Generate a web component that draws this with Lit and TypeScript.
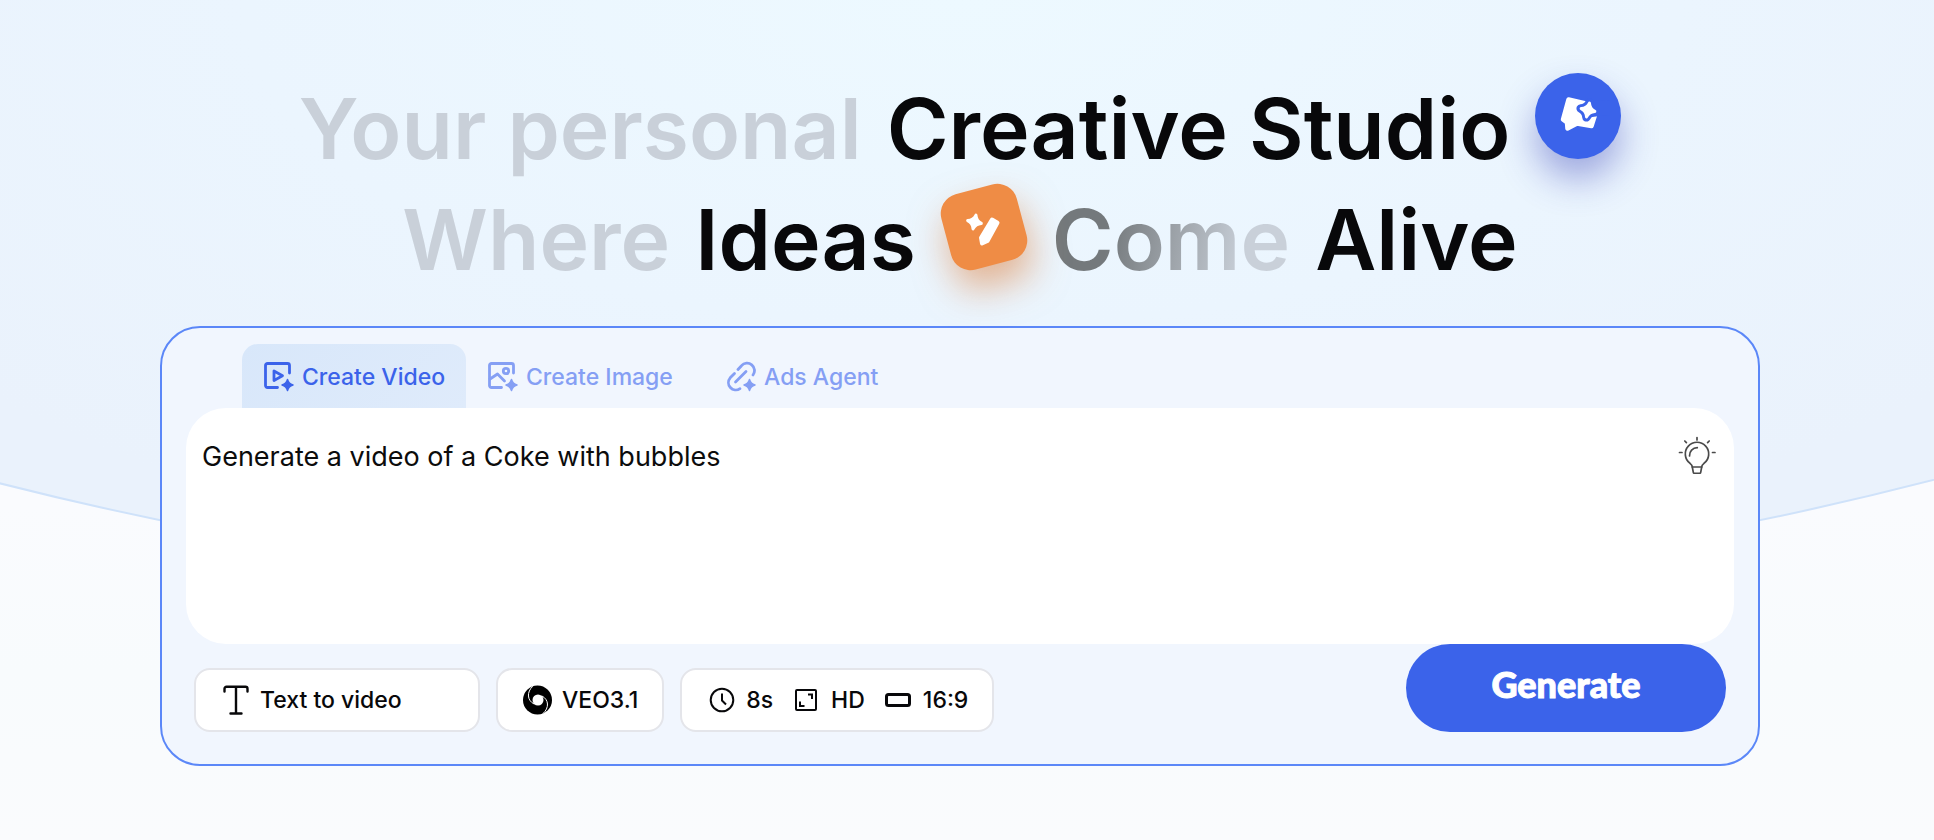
import { LitElement, html, css, svg } from "lit";
import { customElement, state } from "lit/decorators.js";
import { classMap } from "lit/directives/class-map.js";

const sparkle = (cx: number, cy: number, r: number) => {
  const k = r * 0.3;
  return `M${cx} ${cy - r}Q${cx + k * 0.7} ${cy - k * 0.7} ${cx + r} ${cy}Q${cx + k * 0.7} ${cy + k * 0.7} ${cx} ${cy + r}Q${cx - k * 0.7} ${cy + k * 0.7} ${cx - r} ${cy}Q${cx - k * 0.7} ${cy - k * 0.7} ${cx} ${cy - r}Z`;
};

const frame = svg`<path d="M13.5 26.5H3.5a2 2 0 0 1-2-2V4.500a2 2 0 0 1 2-2h20a2 2 0 0 1 2 2V12" />`;
const tabStar = svg`<path d=${sparkle(23.5, 24, 5.5)} fill="currentColor" stroke-width="1.500" />`;

const videoIcon = svg`${frame}<path d="M10 10v9.500l8.500-4.700z" />${tabStar}`;
const imageIcon = svg`${frame}<circle cx="18" cy="10" r="2.700" /><path d="M2 18l7.500-5 7 7" />${tabStar}`;
const linkIcon = svg`
  <path d="M12 8.500l3.500-3.800a7.400 7.400 0 0 1 11.500 9.300" />
  <path d="M8.500 12.500L4.200 16.800a7.400 7.400 0 0 0 9.800 10.900" />
  <path d="M9.500 21L20 10.500" />
  ${tabStar}`;

const TABS = [
  { id: "video", label: "Create Video", icon: videoIcon },
  { id: "image", label: "Create Image", icon: imageIcon },
  { id: "ads", label: "Ads Agent", icon: linkIcon },
];

@customElement("app-root")
export class AppRoot extends LitElement {
  static styles = css`
    :host {
      display: block;
      position: relative;
      overflow: hidden;
      min-height: 100vh;
      box-sizing: border-box;
      padding: 73px 14px 73px 0;
      background: linear-gradient(#fafbfe 60%, #f8fbfd 80%, #fafbfd);
      font-family: Inter, "Liberation Sans", sans-serif;
      color: #08080a;
    }
    * {
      box-sizing: border-box;
    }
    .dome {
      position: absolute;
      left: calc(50% - 7px - 3911px);
      top: -7218px;
      width: 7822px;
      height: 7822px;
      border-radius: 50%;
      border: 2px solid #cfe2fa;
      background: radial-gradient(ellipse 1300px 600px at 50% calc(100% - 604px), #edf9ff, #ebf5fe 55%, #eaf2fc);
    }
    main {
      position: relative;
    }
    h1 {
      margin: 0 0 31px;
      font-size: 84px;
      line-height: 111px;
      font-weight: 600;
    }
    .line {
      display: flex;
      justify-content: center;
      gap: 25px;
      white-space: nowrap;
    }
    .soft {
      color: #c9d0d9;
    }
    .fade {
      background: linear-gradient(100deg, #74797c 25%, #c9d0d9 80%);
      background-clip: text;
      -webkit-background-clip: text;
      color: transparent;
    }
    .badge {
      position: relative;
      flex: none;
      width: 86px;
      height: 86px;
    }
    .badge::before {
      content: "";
      position: absolute;
      inset: 0;
    }
    .badge svg {
      position: relative;
      display: block;
    }
    .chat::before {
      border-radius: 50%;
      background: #3b63ea;
      box-shadow: 0 20px 36px rgba(50, 60, 180, 0.42);
    }
    .edit::before {
      inset: 4px;
      border-radius: 20px;
      background: #ef8c45;
      transform: rotate(-15deg);
      box-shadow: 0 20px 36px rgba(220, 125, 60, 0.55);
    }
    .panel {
      width: min(1600px, 100% - 32px);
      margin: 0 auto;
      padding: 16px 24px 32px;
      border: 2px solid #5b87f8;
      border-radius: 40px;
      background: #f1f6fe;
    }
    button {
      font: inherit;
      color: inherit;
      border: 0;
      background: none;
      padding: 0;
      cursor: pointer;
    }
    .tabs {
      display: grid;
      grid-template-columns: 224px 238px 200px;
      margin-left: 56px;
    }
    .tab {
      display: flex;
      align-items: center;
      gap: 8px;
      height: 64px;
      padding: 2px 22px 0;
      border-radius: 16px 16px 0 0;
      color: #859ff4;
      font-size: 23px;
      font-weight: 500;
      white-space: nowrap;
    }
    .tab.active {
      color: #3b63ea;
      background: linear-gradient(135deg, #d8e7fa, #dfebfb);
    }
    .tab svg {
      stroke-width: 2.8;
    }
    svg {
      flex: none;
      fill: none;
      stroke: currentColor;
      stroke-linecap: round;
      stroke-linejoin: round;
    }
    .prompt {
      position: relative;
      display: flex;
    }
    textarea {
      flex: 1;
      height: 236px;
      padding: 33px 72px 32px 16px;
      border: 0;
      border-radius: 40px;
      outline: 0;
      resize: none;
      background: #fff;
      color: #0c0c0c;
      font: 400 27px/32px Inter, "Liberation Sans", sans-serif;
    }
    .hint {
      position: absolute;
      top: 28px;
      right: 18px;
      color: #4a4a4a;
    }
    .hint svg {
      display: block;
    }
    .footer {
      display: flex;
      align-items: flex-end;
      gap: 16px;
      padding: 0 8px;
    }
    .chip {
      display: flex;
      align-items: center;
      gap: 18px;
      height: 64px;
      padding: 0 24px;
      border: 2px solid #e4e5ea;
      border-radius: 16px;
      background: #fff;
      font-size: 23px;
      font-weight: 500;
      white-space: nowrap;
    }
    .mode {
      width: 286px;
    }
    .item {
      display: flex;
      align-items: center;
      gap: 10px;
    }
    .generate {
      margin-left: auto;
      width: 320px;
      height: 88px;
      padding-bottom: 8px;
      border-radius: 44px;
      background: #3b63ea;
      color: #fff;
      font: 900 36px/44px Lato, Inter, sans-serif;
      -webkit-text-stroke: 1px #fff;
    }
  `;

  @state() private tab = "video";

  render() {
    return html`
      <div class="dome"></div>
      <main>
        <h1>
          <span class="line">
            <span class="soft">Your personal</span>
            <span>Creative Studio</span>
            <span class="badge chat">
              <svg width="86" height="86" viewBox="0 0 86 86" aria-hidden="true">
                <path d="M33.500 26.500L57 32L60 42L56.500 53L42 50.500L32.500 55.500L32 49.500L28 46.500Z" fill="#fff" stroke="#fff" stroke-width="4.500" />
                <path d="M46 28.500L70 27L70 42L60 43L52 44Z" fill="#3b63ea" stroke="none" transform="translate(5 0)" />
                <path d=${sparkle(53, 37, 7.5)} fill="#3b63ea" stroke="#3b63ea" stroke-width="8.500" transform="rotate(12 53 37)" />
                <path d=${sparkle(53, 37, 7)} fill="#fff" stroke="#fff" stroke-width="3" transform="rotate(12 53 37)" />
              </svg>
            </span>
          </span>
          <span class="line">
            <span class="soft">Where</span>
            <span>Ideas</span>
            <span class="badge edit">
              <svg width="86" height="86" viewBox="0 0 86 86" aria-hidden="true">
                <path d=${sparkle(33.5, 38, 7)} fill="#fff" stroke="#fff" stroke-width="3" transform="rotate(12 33.500 38)" />
                <path d="M51 35.500L56.500 38.700L46.500 57L41 59.500L40 53.700Z" fill="#fff" stroke="#fff" stroke-width="4" />
              </svg>
            </span>
            <span class="fade">Come</span>
            <span>Alive</span>
          </span>
        </h1>

        <section class="panel">
          <div class="tabs" role="tablist">
            ${TABS.map(
              (t) => html`<button
                class=${classMap({ tab: true, active: this.tab === t.id })}
                role="tab"
                aria-selected=${this.tab === t.id}
                @click=${() => (this.tab = t.id)}
              >
                <svg width="30" height="32" viewBox="0 0 30 32" aria-hidden="true">${t.icon}</svg>${t.label}
              </button>`
            )}
          </div>

          <div class="prompt">
            <textarea aria-label="Prompt" .value=${"Generate a video of a Coke with bubbles"}></textarea>
            <button class="hint" aria-label="Inspire me">
              <svg width="38" height="38" viewBox="0 0 38 38" stroke-width="1.700">
                <path d="M14.300 31c0-1.800-.8-2.500-2.300-3.700a11.700 11.700 0 1 1 14 0c-1.500 1.200-2.300 1.900-2.300 3.700z" />
                <path d="M14.300 31l1 5.300q.2 1 1.200 1h5q1 0 1.200-1l1-5.300" />
                <path d="M11.500 20a7.800 7.800 0 0 1 7.800-8.300M19 1.500v2.500M6.800 5l1.600 1.700M31.200 5l-1.600 1.700M1.500 16.500h2.500M34.500 16.500h2.500" />
              </svg>
            </button>
          </div>

          <div class="footer">
            <button class="chip mode">
              <span class="item">
                <svg width="30" height="30" viewBox="0 0 30 30" stroke-width="2.400" aria-hidden="true">
                  <path d="M4.500 6.500V3.800a2 2 0 0 1 2-2h19a2 2 0 0 1 2 2v2.700M16 1.800V28.500M10.500 28.500h11" />
                </svg>
                Text to video
              </span>
            </button>
            <button class="chip">
              <span class="item">
                <svg width="30" height="30" viewBox="0 0 30 30" stroke="none" aria-hidden="true">
                  <circle cx="15.500" cy="15" r="14.500" fill="#000" stroke="none" />
                  <circle cx="16" cy="15" r="5.500" fill="#fff" stroke="none" />
                  <path d="M10.500 1.500C4.500 7 5 15.500 12 19M21 28.500C27.500 23 27 14.500 20 11" stroke="#fff" stroke-width="1" />
                </svg>
                VEO3.1
              </span>
            </button>
            <button class="chip">
              <span class="item">
                <svg width="30" height="30" viewBox="0 0 30 30" stroke-width="2" aria-hidden="true">
                  <circle cx="16" cy="15" r="11.300" /><path d="M16 8.500V15.500l4 4" stroke-linecap="butt" />
                </svg>
                8s
              </span>
              <span class="item">
                <svg width="30" height="30" viewBox="0 0 30 30" stroke-width="2" aria-hidden="true">
                  <rect x="5" y="5" width="20" height="20" rx="1" />
                  <path d="M17 9.500H21V14M9 16.500V21H13.500" stroke-linecap="butt" stroke-linejoin="miter" />
                </svg>
                HD
              </span>
              <span class="item">
                <svg width="30" height="30" viewBox="0 0 30 30" stroke-width="3" aria-hidden="true">
                  <rect x="3.500" y="9.500" width="23" height="11" rx="2" />
                </svg>
                16:9
              </span>
            </button>
            <button class="generate">Generate</button>
          </div>
        </section>
      </main>
    `;
  }
}
